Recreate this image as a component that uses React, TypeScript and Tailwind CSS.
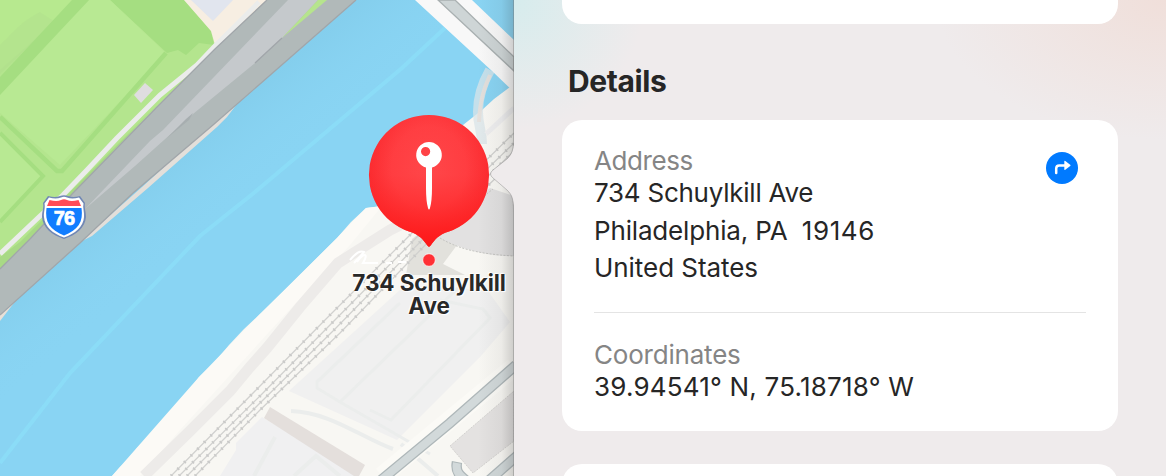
import type { ReactNode } from "react";

const rails = [
  "M171 476 260 386 324 321 413 232 514 133",
  "M179 476 260 396 329 326 419 235 514 143",
  "M187 476 260 403 335 329 425 237 514 151",
  "M195 476 260 410 340 333 432 238 514 161",
];

const markerShape =
  "M429 115A60 60 0 0 1 449 231.600C438 235 435 240 431 245Q429 248.500 427 245C423 240 420 235 409 231.600A60 60 0 0 1 429 115Z";

function Basemap() {
  return (
    <svg viewBox="0 0 514 476" className="block h-[476px] w-[514px]" aria-hidden="true">
      <defs>
        <linearGradient id="edge" x1="0" x2="1" y1="0" y2="0">
          <stop offset="0" stopColor="#333" stopOpacity="0" />
          <stop offset=".65" stopColor="#333" stopOpacity=".06" />
          <stop offset="1" stopColor="#333" stopOpacity=".22" />
        </linearGradient>
        <linearGradient id="shallows" gradientUnits="userSpaceOnUse" x1="150" y1="180" x2="200" y2="240">
          <stop offset="0" stopColor="#7fc8e6" stopOpacity=".45" />
          <stop offset="1" stopColor="#89d4f3" stopOpacity="0" />
        </linearGradient>
        <radialGradient id="pin" cx=".5" cy=".4" r=".62">
          <stop offset="0" stopColor="#ff484b" />
          <stop offset=".5" stopColor="#ff3e42" />
          <stop offset="1" stopColor="#f91f24" />
        </radialGradient>
        <linearGradient id="pinShade" x1="0" x2="0" y1="0" y2="1">
          <stop offset="0" stopColor="#ff4a4e" stopOpacity=".15" />
          <stop offset=".45" stopColor="#ff2d2d" stopOpacity=".05" />
          <stop offset="1" stopColor="#ff1616" stopOpacity=".9" />
        </linearGradient>
      </defs>

      {/* river */}
      <rect width="514" height="476" fill="#89d4f3" />
      <rect width="514" height="476" fill="url(#shallows)" />
      <path d="M445 28 402 68 255 192 200 236 70 373 0 463" fill="none" stroke="#8bdcf7" strokeWidth="4" />

      {/* park */}
      <path d="M0 0H260V10L0 275Z" fill="#b4e58e" />
      <path d="M0 0H80L0 70Z" fill="#b7e98f" />
      <path d="M0 45C14 32 20 22 40 12L55 22 0 74Z" fill="#add98a" opacity=".25" />
      <path d="M89 0H184L211 31 214 45 199 43 186 55 178 50 167 53 110 0Z" fill="#a5de81" />
      <path d="M110 0 166 53 60 165 0 113V90L89 0Z" fill="#b8e993" />
      <path d="M166 53 62 171H57L0 117" fill="none" stroke="#a5de81" strokeWidth="4.5" />
      <path d="M0 133 43 176 0 222" fill="#b8e993" stroke="#a5de81" strokeWidth="4" />
      <path d="M72 0H89L0 95V77Z" fill="#a5de81" />
      <path d="M0 257 20 242 90 172 157 105 70 196 28 241 0 269Z" fill="#a8d985" />
      <path d="M134 95 145 83 153 90 141 103Z" fill="#dfdde0" />
      <path d="M184 0 211 31 215 45 235 42 280 0Z" fill="#f7eee2" />
      <path d="M191 0 213 21 233 0Z" fill="#e1e5ee" />

      {/* expressway */}
      <path d="M0 254 40 216 63 195 87 170 117 138 160 95 197 65 215 46 259 2" fill="none" stroke="#ebeceb" strokeWidth="5" />
      <path d="M80 242 142 187 216 120 237 104 227 117 217 127 148 188 92 236Z" fill="#e3dfda" />
      <path d="M0 314 12 303 17 299 0 321Z" fill="#e8e0d7" />
      <path d="M267 0 215 49 157 107 73 193 30 239 0 269V315L80 243 133 193 213 125 260 84 356 0Z" fill="#b1b9b9" />
      <path d="M85 209 150 141 163 130 288 0H318L283 37 255 63 193 114 135 166Z" fill="#c5c9cc" />
      <path d="M167 138 186 119 193 113 189 120Z" fill="#a7aeb0" />
      <path d="M282 38 318 0H327Z" fill="#b6e48d" />
      <path d="M267 0 215 49 157 107 73 193 30 239 0 269M356 0 260 84 213 125 133 193 80 243 0 315M255 63 282 38" fill="none" stroke="#a1a6aa" strokeWidth="1.3" />

      {/* east bank */}
      <path d="M112 476 120 467 130 458 137 448 147 440 158 425 167 417 180 403 191 388 199 377 213 364 229 345 244 329 260 314 289 286 337 238 351 222 366 208 382 206 463 125 482 110 494 99 514 84V476Z" fill="#f8f7f3" />
      <path d="M112 476 199 377 260 314 337 238 366 208 382 206 350 245 280 320 180 430 140 476Z" fill="#fcfaf6" />
      <path d="M144 476 190 431 230 391 250 367 267 348 300 307 338 263 390 230 410 220" fill="none" stroke="#edebe9" strokeWidth="11" />
      <path d="M289 391 400 290 430 285 488 291 510 322 480 357 397 440Z" fill="#f0f0f0" />
      <path d="M220 476 236 450 236 443 262 417 360 476Z" fill="#f0f0f1" />
      <path d="M400 303 317 382V388L340 402 380 425 430 454M340 402 458 288M440 300 483 309 490 318 391 420 370 410" fill="none" stroke="#ebedec" strokeWidth="3" />
      <path d="M412 239 432 223 457 245 443 264 465 275H406Z" fill="#e2e1dc" />
      <path d="M440 231 490 188 514 196V256C486 257 460 248 440 238Z" fill="#e2e1e1" />
      <path d="M440 231 493 189M440 238C455 247 475 254 514 256" fill="none" stroke="#c5c5c2" strokeWidth="1" strokeDasharray="2 1.5" />
      <path d="M270 407 365 465 359 476H354L264 418Z" fill="#e4dfdc" />
      <path d="M291 411C330 412 362 438 393 449M401 444 438 476M254 476 275 437M294 476 316 456 340 476" fill="none" stroke="#ebedec" strokeWidth="4" />

      {/* rail lines */}
      <g fill="none" stroke="#d1d1cf" strokeWidth="1.3">
        {rails.map((d) => (
          <path key={d} d={d} />
        ))}
      </g>
      <g fill="none" stroke="#cacac9" strokeWidth="3.2" strokeDasharray="1.6 7.8">
        {rails.map((d) => (
          <path key={d} d={d} />
        ))}
      </g>
      <path d="M350 260C356 253 360 250 364 252L354 263M357 262C364 252 369 253 363 263H378M386 263H392M398 262H406" fill="none" stroke="#fff" strokeWidth="2" />

      {/* southern streets */}
      <path d="M382 476 514 367" fill="none" stroke="#fbfaf6" strokeWidth="19" />
      <path d="M450 446 514 391V441L473 473Z" fill="#e4e2e1" stroke="#cccac8" strokeWidth=".8" strokeDasharray="2 1" />
      <path d="M380 481 450 423 516 365" fill="none" stroke="#aeb7b9" strokeWidth="10.5" />
      <path d="M380 481 450 423 516 365" fill="none" stroke="#d2d9da" strokeWidth="8" />
      <path d="M485 484 518 455M457 462C455 472 460 476 468 482" fill="none" stroke="#aeb7b9" strokeWidth="10.5" />
      <path d="M485 484 518 455M457 463C455 472 460 476 468 482" fill="none" stroke="#d2d9da" strokeWidth="8" />

      {/* bridge and ramp */}
      <path d="M490 70C482 84 478 97 478 112 478 126 482 130 482 144" fill="none" stroke="#d9e4e8" strokeOpacity=".75" strokeWidth="10" />
      <path d="M490 75C484 88 480 100 479 122" fill="none" stroke="#e4dfda" strokeOpacity=".9" strokeWidth="4" />
      <path d="M486 134 514 108" fill="none" stroke="#eeeeef" strokeWidth="5" />
      <path d="M415 0H472L514 40V92L492 71Z" fill="#f8f8f8" />
      <path d="M438 0H455L514 57V71Z" fill="#ced5d6" stroke="#a9b0b1" strokeWidth="1.3" />

      <rect x="478" width="36" height="476" fill="url(#edge)" />

      {/* callout pointer */}
      <path d="M515 138C514 151 511 155 507 159L493 170Q488 174 493 178L507 190C512 195 513 198 515 212Z" fill="#efebec" />
      <path d="M513.5 0V140C513.5 151 511 155 507 159L493 170Q488 174 493 178L507 190C512 195 513.5 198 513.5 212V476" fill="none" stroke="#777" strokeOpacity=".4" strokeWidth="1" />

      {/* place marker */}
      <path d={markerShape} fill="url(#pin)" />
      <path d={markerShape} fill="url(#pinShade)" />
      <path fillRule="evenodd" d="M429 142A13 13 0 0 1 432 167.600V188Q432 201 430 208Q429 211 428 208Q426 201 426 188V167.600A13 13 0 0 1 429 142ZM425.600 147A4.600 4.600 0 1 0 425.600 156.200A4.600 4.600 0 1 0 425.600 147Z" fill="#fff" />
      <circle cx="429" cy="260" r="6.300" fill="#ff3035" stroke="#fff" strokeOpacity=".75" strokeWidth="1" />

      {/* interstate shield */}
      <path d="M48 196Q55 198 60 196Q64 194.500 68 196Q73 198 80 196L85 203C84 208 86 211 86 217C85 228 76 235 64 239C52 235 43 228 42 217C42 211 44 208 43 203Z" fill="#7188b5" />
      <path d="M49 197.500Q56 199.500 61 197.500Q64 196 67 197.500Q72 199.500 79 197.500L83.500 203.500C82.500 208 84.500 212 84 217C83.500 227 75 233.500 64 237.500C53 233.500 44.500 227 44 217C43.500 212 45.500 208 44.500 203.500Z" fill="#fff" />
      <path d="M49.500 200Q57 202 61 200Q64 198.500 67 200Q71 202 78.500 200L81 206H47Z" fill="#ff4b57" />
      <path d="M46.500 208H81.500C83.500 222 78 230 64 235.500C50 230 44.500 222 46.500 208Z" fill="#117dff" />
    </svg>
  );
}

function MapView() {
  return (
    <section className="relative h-[476px] w-[514px] shrink-0 overflow-hidden">
      <Basemap />
      <span className="absolute left-[44px] top-[208px] w-10 text-center font-['Liberation_Sans',sans-serif] text-[20px] font-bold leading-5 tracking-[-0.8px] text-white [-webkit-text-stroke:0.7px_white]">76</span>
      <div className="absolute left-[339px] top-[271px] w-[180px] text-center text-[22.5px] font-bold leading-[23px] tracking-[-0.1px] text-[#292929] [text-shadow:0_0_2px_#fff,0_0_2px_#fff,1px_1px_1px_#fff,-1px_-1px_1px_#fff]">
        734 Schuylkill
        <br />
        Ave
      </div>
    </section>
  );
}

function Field({ label, children }: { label: ReactNode; children: ReactNode }) {
  return (
    <div>
      <div className="h-[31px] pt-[2px] text-[26px] leading-8 text-[#858585]">{label}</div>
      <div className="whitespace-pre text-[26px] leading-[37.5px] text-[#262626]">{children}</div>
    </div>
  );
}

function DirectionsButton() {
  return (
    <button className="grid size-8 place-items-center rounded-full bg-[#007aff]" aria-label="Directions">
      <svg viewBox="0 0 32 32" className="size-8">
        <path d="M10.200 21V16.500Q10.200 13.400 13.300 13.400H19" fill="none" stroke="#fff" strokeWidth="2.500" strokeLinecap="round" />
        <path d="M18.300 9.500Q18.300 8.500 19.300 9L24.200 12.700Q25 13.400 24.200 14.100L19.300 17.800Q18.300 18.400 18.300 17.300Z" fill="#fff" />
      </svg>
    </button>
  );
}

export default function App() {
  return (
    <main className="flex h-[476px] w-[1166px] overflow-hidden font-['Inter','Liberation_Sans',sans-serif]">
      <MapView />
      <aside className="flex h-[476px] w-[652px] flex-col bg-[#efebec] bg-[radial-gradient(ellipse_130px_130px_at_0_0,#d6eced,transparent),radial-gradient(ellipse_230px_140px_at_100%_0,#f0dfda,transparent)] pl-12 pr-12">
        <div className="h-6 shrink-0 rounded-b-[20px] bg-white" />
        <h2 className="flex h-24 shrink-0 items-end pb-[19px] pl-[6px] text-[30px] font-bold leading-10 tracking-[-0.4px] text-[#262626]">Details</h2>
        <div className="h-[311px] shrink-0 rounded-[20px] bg-white px-8 pt-[23px]">
          <div className="flex h-[170px] justify-between border-b border-[#e4e4e4]">
            <Field label={<span className="tracking-[-0.4px]">Address</span>}>
              <div className="tracking-[-0.25px]">734 Schuylkill Ave</div>
              <div className="tracking-[-0.17px]">
                {"Philadelphia, PA  "}
                <span className="tracking-[0.6px]">19146</span>
              </div>
              <div className="tracking-[-0.05px]">United States</div>
            </Field>
            <div className="mr-2 pt-[9px]">
              <DirectionsButton />
            </div>
          </div>
          <div className="pt-[24px]">
            <Field label={<span className="tracking-[-0.2px]">Coordinates</span>}>
              <div className="tracking-[0.2px]">39.94541° N, 75.18718° W</div>
            </Field>
          </div>
        </div>
        <div className="mt-[33px] h-20 shrink-0 rounded-[20px] bg-white" />
      </aside>
    </main>
  );
}
